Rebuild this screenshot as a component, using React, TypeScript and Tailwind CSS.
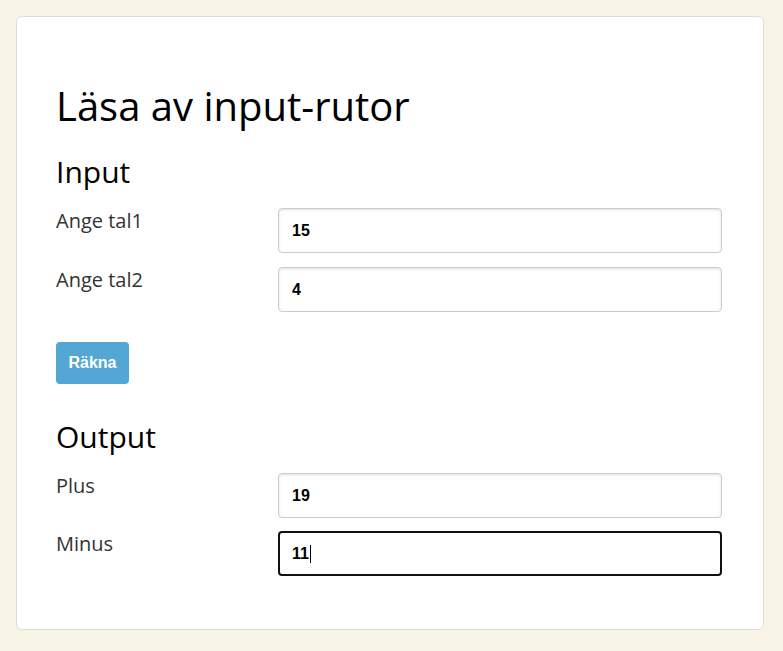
import React from "react";

const sans = { fontFamily: '"Open Sans", "Noto Sans", sans-serif' };

function Field({ value, focused }: { value: string; focused?: boolean }) {
  if (focused) {
    return (
      <div className="flex h-[45px] w-[444px] items-center rounded-[4px] border-2 border-[#111] bg-white pl-[12px] font-['Liberation_Sans',Arial,sans-serif] text-[16px] font-bold text-black">
        <span>{value}</span>
        <span className="ml-[1px] inline-block h-[18px] w-px bg-black" />
      </div>
    );
  }
  return (
    <input
      readOnly
      value={value}
      className="h-[45px] w-[444px] rounded-[4px] border border-[#cccccc] bg-white pl-[13px] font-['Liberation_Sans',Arial,sans-serif] text-[16px] font-bold text-black shadow-[inset_0_1px_3px_rgba(0,0,0,0.12)] outline-none"
    />
  );
}

function Row({ label, value, focused }: { label: string; value: string; focused?: boolean }) {
  return (
    <div className="flex">
      <div className="w-[222px] text-[20px] font-normal leading-[26px] text-[#333]" style={sans}>
        {label}
      </div>
      <Field value={value} focused={focused} />
    </div>
  );
}

export default function App() {
  return (
    <div className="min-h-[651px] bg-[#f7f4e6] pt-[16px] pl-[16px]">
      <div className="w-[748px] rounded-[6px] border border-[#dddddd] bg-white pl-[39px] pr-[41px] pt-[67px] pb-[53px]" style={sans}>
        <h1 className="text-[40px] leading-[44px] text-black">Läsa av input-rutor</h1>
        <h2 className="mt-[27px] text-[30px] leading-[33px] text-black">Input</h2>
        <div className="mt-[20px] flex flex-col gap-[14px]">
          <Row label="Ange tal1" value="15" />
          <Row label="Ange tal2" value="4" />
        </div>
        <button className="mt-[30px] h-[42px] w-[73px] rounded-[4px] bg-[#54a6d4] font-['Liberation_Sans',Arial,sans-serif] text-[16px] font-bold text-white">
          Räkna
        </button>
        <h2 className="mt-[36px] text-[30px] leading-[33px] text-black">Output</h2>
        <div className="mt-[20px] flex flex-col gap-[13px]">
          <Row label="Plus" value="19" />
          <Row label="Minus" value="11" focused />
        </div>
      </div>
    </div>
  );
}
